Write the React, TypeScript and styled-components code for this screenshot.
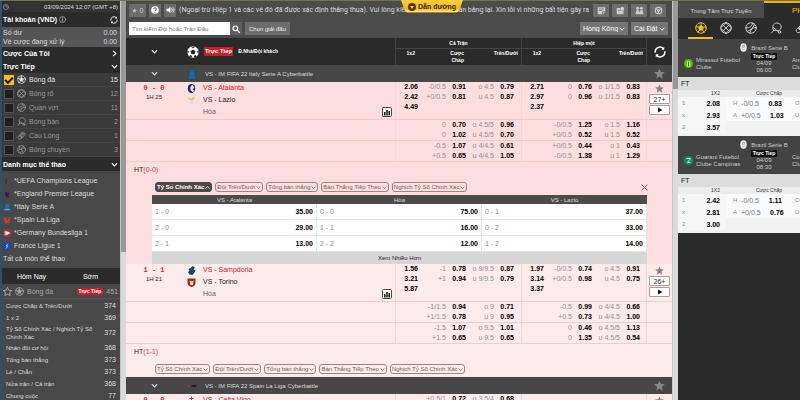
import React from "react";
import styled, { createGlobalStyle } from "styled-components";

const GlobalStyle = createGlobalStyle`
  * { box-sizing: border-box; }
  body { margin: 0; background: #2a2a2a; font-family: "Liberation Sans", Arial, sans-serif; font-size: 7px; color: #ddd; }
  button, input, select { font: inherit; color: inherit; margin: 0; padding: 0; border: 0; border-radius: 0; background: none; }
  button { cursor: pointer; }
  ul { list-style: none; margin: 0; padding: 0; }
  h2, p { margin: 0; font-size: inherit; font-weight: inherit; }
  a { color: inherit; text-decoration: none; }
  svg { display: block; flex: none; }
  table { border-spacing: 0; width: 100%; table-layout: fixed; }
  th, td { padding: 0; }
`;

/* ---------- icons ---------- */

type IconProps = { size?: number; color?: string };

const Svg = ({ size = 9, color = "currentColor", children }: IconProps & { children: React.ReactNode }) => (
  <svg width={size} height={size} viewBox="0 0 24 24" fill="none" stroke={color} strokeWidth="2" strokeLinejoin="round" strokeLinecap="round" aria-hidden="true">
    {children}
  </svg>
);

const Soccer = (p: IconProps) => (
  <Svg {...p}>
    <circle cx="12" cy="12" r="10.5" />
    <path d="M12 7.2l4.7 3.4-1.8 5.5H9.1l-1.8-5.5z" fill={p.color ?? "currentColor"} />
    <path d="M12 7V2M16.8 10.6l5-1.6M15 16.200l3.200 4.400M9 16.200l-3.200 4.400M7.200 10.600l-5-1.600" />
  </Svg>
);
const SolidSoccer = ({ size = 12 }: IconProps) => (
  <svg width={size} height={size} viewBox="0 0 24 24" aria-hidden="true">
    <circle cx="12" cy="12" r="11.500" fill="#fff" />
    <path d="M12 7l5 3.600-1.900 5.900H8.900L7 10.600zM8 1.500h8l-4 2.800zM22.800 8.500l.2 7-3.300-3.900zM1.200 8.500l-.2 7 3.300-3.900zM17.500 18.200l1.700 3-5.200 2 .3-3.600zM6.500 18.200l-1.700 3 5.200 2-.3-3.600z" fill="#222" />
  </svg>
);
const Basketball = (p: IconProps) => (
  <Svg {...p}>
    <circle cx="12" cy="12" r="10.5" />
    <path d="M4.600 4.600l14.800 14.800M19.400 4.600L4.600 19.400M12 1.500c-4 5-8 8-10.500 8.500M12 1.500c4 5 8 8 10.500 8.500M12 22.500c-4-5-8-8-10.500-8.500M12 22.500c4-5 8-8 10.500-8.500" />
  </Svg>
);
const Tennis = (p: IconProps) => (
  <Svg {...p}>
    <circle cx="12" cy="12" r="10.5" />
    <path d="M15 2c0 6-5 10-13 10M22 11c-7 0-12 5-12 11.500M19 4C17 11 12 16 4.500 19" />
  </Svg>
);
const Paddle = (p: IconProps) => (
  <Svg {...p}>
    <path d="M7.500 16.500C3 11 6 2 14 2c6 0 9.500 5 8 10-1 3.500-4 5-7 5-2.500 0-4.500 0-7.500-.5zM7.500 16.500L3 22M7 11l9 8" />
    <circle cx="19" cy="20" r="2.500" />
  </Svg>
);
const Shuttle = (p: IconProps) => (
  <Svg {...p}>
    <path d="M7 12L14 2l3 3 4 1 1 4-9 8zM9 10l5 6M12 9l5-4M14 11l6-4" />
    <path d="M7 12c-4 1-5 4-4 7s5 3 7 1l3-2z" />
  </Svg>
);
const Volley = (p: IconProps) => (
  <Svg {...p}>
    <circle cx="12" cy="12" r="10.5" />
    <path d="M12 12c-4-2-8-1-10 3M12 12c0-5 2-8 6-9.500M12 12c4 2 5 6 3 10M7 3c-1 3 0 6 1 8M21 9c-3-1-6-1-9 0M8 21c2-1 5-3 6-6" />
  </Svg>
);
const Chevron = ({ size = 7, dir = 0, color = "currentColor" }: IconProps & { dir?: number }) => (
  <svg width={size} height={size} viewBox="0 0 12 12" fill="none" stroke={color} strokeWidth="1.800" aria-hidden="true">
    <path d="M1.500 3.500L6 8.500l4.500-5" transform={`rotate(${dir} 6 6)`} />
  </svg>
);
const Star = ({ size = 10, color = "#888", outline }: IconProps & { outline?: boolean }) => (
  <svg width={size} height={size} viewBox="0 0 24 24" fill={outline ? "none" : color} stroke={outline ? color : "none"} strokeWidth="2" aria-hidden="true">
    <path d="M12 1l3.300 7.600 8.200.800-6.200 5.500 1.800 8.100-7.100-4.200L4.900 23l1.800-8.100L.5 9.400l8.200-.8z" />
  </svg>
);
const Refresh = ({ size = 8 }: IconProps) => (
  <svg width={size} height={size} viewBox="0 0 24 24" fill="none" stroke="#fff" strokeWidth="2.800" aria-hidden="true">
    <path d="M2.500 13.500A9.500 9.500 0 0 1 19 5.500M21.500 10.500A9.500 9.500 0 0 1 5 18.500" />
    <path d="M20.500 1.500v6h-6zM3.500 22.500v-6h6z" fill="#fff" stroke="none" />
  </svg>
);
const Clock = () => <Svg size={6} color="#bbb"><circle cx="12" cy="12" r="10" /><path d="M12 6v6h5" /></Svg>;
const Info = () => <Svg size={7} color="#ccc"><circle cx="12" cy="12" r="10.5" /><path d="M12 10.500v7M12 6v1" strokeWidth="2.500" /></Svg>;
const Search = () => <Svg size={8} color="#fff"><circle cx="10" cy="10" r="7" strokeWidth="3.500" /><path d="M16 16l6 6" strokeWidth="4" /></Svg>;
const Help = () => (
  <svg width="8" height="8" viewBox="0 0 24 24" aria-hidden="true">
    <circle cx="12" cy="12" r="11.500" fill="#fff" />
    <path d="M8 9c0-5 8-5 8 0 0 3-4 3-4 6M12 17.500v2.500" fill="none" stroke="#555" strokeWidth="2.800" />
  </svg>
);
const Speaker = () => (
  <svg width="9" height="8" viewBox="0 0 26 24" fill="none" stroke="#fff" strokeWidth="2.600" aria-hidden="true">
    <path d="M1 8h5l7-6v20l-7-6H1z" fill="#fff" stroke="none" />
    <path d="M16 7c3 3 3 7 0 10M20 4c5 5 5 11 0 16" />
  </svg>
);
const Note = () => <svg width="9" height="9" viewBox="0 0 24 24" aria-hidden="true"><path d="M2 3h20v12l-6 7H2z" fill="#ccc" /><path d="M5 8h13M5 12h9M15 21v-6h6" stroke="#666" strokeWidth="2" fill="none" /></svg>;
const Ticket = () => <svg width="9" height="9" viewBox="0 0 24 24" aria-hidden="true"><path d="M2 5h12v3h6v14H2z" fill="#ccc" /><circle cx="17" cy="7" r="5" fill="#ddd" stroke="#666" /><path d="M6 12h6" stroke="#666" strokeWidth="2" /></svg>;
const People = () => <svg width="9" height="9" viewBox="0 0 24 24" fill="#ccc" aria-hidden="true"><circle cx="7" cy="6" r="4" /><circle cx="17" cy="6" r="4" /><path d="M1 22l3-11h6l2 6 2-6h6l3 11z" /></svg>;
const Gear = () => <svg width="9" height="9" viewBox="0 0 24 24" fill="none" stroke="#ccc" strokeWidth="3" aria-hidden="true"><circle cx="12" cy="12" r="8.500" /><circle cx="12" cy="12" r="2.500" /><path d="M5 7l4 3M19 7l-4 3M12 15v5" /></svg>;
const Bars = () => (
  <svg width="10" height="10" viewBox="0 0 20 20" aria-hidden="true">
    <rect x="1" y="1" width="18" height="18" rx="2" fill="#fff" stroke="#444" strokeWidth="2" />
    <path d="M4 17V10h3v7zM8.500 17V6h3v11zM13 17V8h3v9z" fill="#111" />
  </svg>
);
const Play = () => <svg width="6" height="6" viewBox="0 0 12 12" aria-hidden="true"><path d="M2 1l9 5-9 5z" fill="#111" /></svg>;
const Close = () => <svg width="7" height="7" viewBox="0 0 12 12" stroke="#555" strokeWidth="1.500" aria-hidden="true"><path d="M1 1l10 10M11 1L1 11" /></svg>;
const Cup = () => <svg width="7" height="9" viewBox="0 0 14 18" aria-hidden="true"><ellipse cx="7" cy="9" rx="6.500" ry="8.500" fill="#eee" /><path d="M5 4h4v5H5zM4 13h6" stroke="#999" fill="#ccc" /></svg>;

const crests: Record<string, React.ReactNode> = {
  uefa: <path d="M6 4h2v12H6z" fill="#333" />,
  premier: <path d="M5 3l5 3 4 0-2 5 1 5-5 1-3-6z" fill="#3a1646" />,
  italy: <><path d="M9 1l5 4v5l3 7H2l3-7V5z" fill="#1673b8" /><path d="M3 15h13" stroke="#59b6df" strokeWidth="2" /></>,
  spain: <path d="M2 3l4 12M7 3v12l9-12M11 16l5-8" stroke="#d43a3a" strokeWidth="3" fill="none" />,
  germany: <><rect x="1" y="1" width="16" height="16" rx="2" fill="#d22028" /><path d="M5 4v10M8 6l7 3-7 4z" stroke="#fff" strokeWidth="2" fill="#fff" /></>,
  france: <><rect x="2" y="1" width="14" height="17" fill="#1747c8" /><path d="M11 4L7 9h4l-4 6" stroke="#9fd5ff" strokeWidth="2" fill="none" /></>,
  cyber: <path d="M9 0l5 5v5l3 8H1l3-8V5zM5 13h8M7 5h4" fill="#1d6ba5" stroke="#134c79" />,
  atalanta: <><ellipse cx="9" cy="9" rx="7.500" ry="9" fill="#1c2c55" /><path d="M11 2C5 3 5 14 12 16l3-3-4-2 4-4z" fill="#e8edf5" /></>,
  lazio: <><path d="M1 2l7 3 8-4-3 7-4 2-5-3z" fill="#d9c67c" /><path d="M6 9h6v6l-3 3-3-3z" fill="#cfe2ec" /></>,
  sampdoria: <path d="M11 0l-4 4-4 2 2 3-3 4 3 4 6 1 4-5 2-5-4-1 3-4z" fill="#0f4874" />,
  torino: <><path d="M1 1h16v9c0 5-5 7-8 8-3-1-8-3-8-8z" fill="#8f2f20" /><path d="M5 5l4 2 4-2-1 9H7z" fill="#f1d9a8" /></>,
  laliga: <><circle cx="3" cy="9" r="2" fill="#a3452c" /><path d="M8 9h9" stroke="#181818" strokeWidth="3" /></>,
  celta: <path d="M9 1v16M5 5h8M4 10h10" stroke="#b5336b" strokeWidth="2" fill="none" />,
  villarreal: <circle cx="9" cy="9" r="7" fill="#e4c53a" />,
  mirassol: <><circle cx="9" cy="9" r="9" fill="#49c010" /><path d="M6 4h6l1 11H5z" fill="#dff04f" /><path d="M9 5v9" stroke="#1c7808" strokeWidth="2" /></>,
  guarani: <><circle cx="9" cy="9" r="9" fill="#0f8f63" /><path d="M5 5h8l-6 8h6" stroke="#fff" strokeWidth="1.500" fill="none" /></>,
};
const Crest = ({ name, size = 9 }: { name: string; size?: number }) => (
  <svg width={size} height={size} viewBox="0 0 18 18" aria-hidden="true">{crests[name]}</svg>
);

/* ---------- shell ---------- */

const Shell = styled.div`
  display: grid;
  grid-template-columns: 120px 6px minmax(0, 1fr) 6px 122px;
  height: 100vh;
  overflow: hidden;
  border-top: 1px solid #77704f;
`;
const Track = styled.div`
  background: #dadada;
  border-left: 1px solid #c4c4c4;
`;
const Thumb = styled.div<{ $h: number }>`
  height: ${(p) => p.$h}%;
  background: #999;
`;
const Grow = styled.span`
  flex: 1;
  min-width: 0;
`;

/* ---------- sidebar ---------- */

const Sidebar = styled.nav`
  overflow: hidden;
  background: #484848;
  border-left: 2px solid #2d5168;
`;
const DateBar = styled.div`
  display: flex;
  align-items: center;
  justify-content: space-between;
  height: 11px;
  padding: 0 2px 0 1px;
  background: #333;
  font-size: 6px;
`;
const SideHead = styled.button<{ $h?: number }>`
  display: flex;
  align-items: center;
  gap: 2px;
  width: 100%;
  height: ${(p) => p.$h ?? 13}px;
  padding: 0 2px 0 1px;
  background: #2b2b2b;
  color: #fff;
  font-weight: 700;
  text-align: left;
`;
const Balance = styled.dl`
  margin: 0;
  padding: 1px 3px 1px 1px;
  background: #555;
  line-height: 9px;
  div { display: flex; justify-content: space-between; }
  dd { margin: 0; }
`;
const SportRow = styled.label<{ $on?: boolean }>`
  display: flex;
  align-items: center;
  gap: 3px;
  height: 14px;
  padding: 0 2px;
  background: #3a3a3a;
  border-bottom: 1px solid #444;
  color: ${(p) => (p.$on ? "#e4e4e4" : "#999")};
`;
const Tick = styled.input`
  appearance: none;
  display: grid;
  place-items: center;
  width: 10px;
  height: 10px;
  background: #1f1f1f;
  border: 1px solid #555;
  &:checked { background: #f6c012; border-color: #f6c012; }
  &:checked::after {
    content: "";
    width: 6px;
    height: 3px;
    border: solid #111;
    border-width: 0 0 2px 2px;
    transform: rotate(-45deg);
  }
`;
const LeagueList = styled.ul`
  padding: 3px 0 0 1px;
  a { display: flex; align-items: center; gap: 3px; height: 13px; }
`;
const DayTabs = styled.div`
  display: grid;
  grid-template-columns: 1fr 1fr;
  height: 16px;
  margin-top: 3px;
  background: #2b2b2b;
  color: #fff;
`;
const SportHead = styled.div`
  display: flex;
  align-items: center;
  gap: 3px;
  height: 15px;
  padding: 0 2px 0 1px;
  border-bottom: 1px solid #555;
  color: #aaa;
`;
const Live = styled.span<{ $dark?: boolean }>`
  padding: 0 2px;
  border-radius: 1px;
  background: ${(p) => (p.$dark ? "#111" : "#c81f28")};
  color: #fff;
  font-size: 5px;
  font-weight: 700;
  line-height: 7px;
`;
const BetTypes = styled.ul`
  padding-top: 1px;
  font-size: 6px;
  a {
    display: flex;
    align-items: center;
    justify-content: space-between;
    gap: 6px;
    min-height: 12px;
    padding: 1px 4px;
    line-height: 8px;
  }
  span + span { font-size: 7px; }
`;

const sports = [
  { name: "Bóng đá", count: 15, Icon: Soccer },
  { name: "Bóng rổ", count: 12, Icon: Basketball },
  { name: "Quần vợt", count: 11, Icon: Tennis },
  { name: "Bóng bàn", count: 2, Icon: Paddle },
  { name: "Cầu Lông", count: 1, Icon: Shuttle },
  { name: "Bóng chuyền", count: 3, Icon: Volley },
];
const leagues = [
  ["uefa", "*UEFA Champions League"],
  ["premier", "*England Premier League"],
  ["italy", "*Italy Serie A"],
  ["spain", "*Spain La Liga"],
  ["germany", "*Germany Bundesliga 1"],
  ["france", "France Ligue 1"],
];
const betTypes: [string, number][] = [
  ["Cược Chấp & Trên/Dưới", 374],
  ["1 x 2", 369],
  ["Tỷ Số Chính Xác / Nghịch Tỷ Số Chính Xác", 372],
  ["Nhân đôi cơ hội", 368],
  ["Tổng bàn thắng", 373],
  ["Lẻ / Chẵn", 373],
  ["Nửa trận / Cả trận", 368],
  ["Chung cuộc", 77],
];

const SidebarPanel = () => (
  <Sidebar>
    <DateBar><Clock /><span>03/09/2024 12:07 (GMT +8)</span></DateBar>
    <SideHead $h={15}>Tài khoản (VND) <Info /><Grow /><Refresh size={8} /></SideHead>
    <Balance>
      <div><dt>Số dư</dt><dd>0.00</dd></div>
      <div><dt>Vé cược đang xử lý</dt><dd>0.00</dd></div>
    </Balance>
    <SideHead><Grow>Cược Của Tôi</Grow><Chevron dir={-90} /></SideHead>
    <SideHead><Grow>Trực Tiếp</Grow><Chevron /></SideHead>
    {sports.map(({ name, count, Icon }, i) => (
      <SportRow key={name} $on={i === 0}>
        <Tick type="checkbox" defaultChecked={i === 0} /><Icon size={9} /><Grow>{name}</Grow>{count}
      </SportRow>
    ))}
    <SideHead $h={14}><Grow>Danh mục thể thao</Grow><Chevron /></SideHead>
    <LeagueList>
      {leagues.map(([icon, name]) => <li key={name}><a href="#league"><Crest name={icon} size={8} />{name}</a></li>)}
      <li><a href="#all">Tất cả môn thể thao</a></li>
    </LeagueList>
    <DayTabs><button>Hôm Nay</button><button>Sớm</button></DayTabs>
    <SportHead><Star size={9} color="#bbb" outline /><Soccer size={9} /><Grow>Bóng đá</Grow><Live>Trực Tiếp</Live>451</SportHead>
    <BetTypes>
      {betTypes.map(([name, n]) => <li key={name}><a href="#type"><span>{name}</span><span>{n}</span></a></li>)}
    </BetTypes>
  </Sidebar>
);

/* ---------- odds area ---------- */

const Main = styled.main`
  overflow: hidden;
  background: #fce8e8;
`;
const Notice = styled.div`
  display: flex;
  align-items: center;
  gap: 3px;
  height: 18px;
  padding: 0 6px 0 3px;
  background: #4b4b4b;
`;
const Ticker = styled.p`
  flex: 1;
  display: flex;
  justify-content: space-between;
  overflow: hidden;
  white-space: nowrap;
  margin-right: 1px;
  font-family: Roboto, "Liberation Sans", sans-serif;
  font-size: 7px;
`;
const ToolButton = styled.button<{ $w?: number }>`
  display: flex;
  align-items: center;
  justify-content: center;
  gap: 3px;
  width: ${(p) => p.$w ?? 12}px;
  height: 13px;
  background: #6c6c6c;
  color: #ccc;
`;
const Filters = styled.div`
  display: flex;
  align-items: center;
  gap: 3px;
  height: 19px;
  padding: 0 4px 0 3px;
  background: #4b4b4b;
`;
const SearchBox = styled.form`
  display: flex;
  height: 13px;
  input { width: 101px; padding: 0 3px; background: #fff; color: #333; font-size: 6px; }
  input::placeholder { color: #777; }
  button { display: grid; place-items: center; width: 12px; background: #5f5f5f; }
`;
const GreyButton = styled.button`
  height: 13px;
  padding: 0 4px;
  background: #6c6c6c;
  color: #eee;
  font-size: 6px;
`;
const Picker = styled.label<{ $w: number }>`
  display: flex;
  align-items: center;
  width: ${(p) => p.$w}px;
  height: 13px;
  padding: 0 3px;
  background: #757575;
  color: #fff;
  select { appearance: none; flex: 1; min-width: 0; font-size: 7px; }
`;
const Head = styled.thead`
  background: #2a2a2a;
  color: #fff;
  font-size: 5px;
  line-height: 7px;
  th { vertical-align: middle; }
`;
const HeadTop = styled.tr`
  height: 10px;
`;
const HeadSub = styled.tr`
  height: 17px;
  th { vertical-align: top; padding-top: 1px; text-align: right; border-top: 1px solid #454545; }
`;
const GroupTh = styled.th`
  border-left: 1px solid #454545;
`;
const SubTh = styled.th<{ $pr: number; $edge?: boolean }>`
  padding-right: ${(p) => p.$pr}px;
  border-left: ${(p) => (p.$edge ? "1px solid #454545" : "0")};
`;
const Centered = styled.div`
  display: grid;
  place-items: center;
`;
const Titled = styled.div<{ $gap?: number }>`
  display: flex;
  align-items: center;
  gap: ${(p) => p.$gap ?? 8}px;
  padding-left: 5px;
`;
const HeadLive = styled.span`
  padding: 0 1px;
  border-radius: 1px;
  background: #c81f28;
  font-size: 6px;
  line-height: 9px;
`;
const LeagueRow = styled.tr`
  height: 17px;
  background: #474747;
  color: #ddd;
  font-size: 6px;
`;
const Body = styled.tbody<{ $tone: "hot" | "soft" }>`
  background: ${(p) => (p.$tone === "hot" ? "#fcdede" : "#fdeaea")};
  color: #222;
`;
const OddsRow = styled.tr<{ $h: number }>`
  height: ${(p) => p.$h}px;
  td { vertical-align: top; border-bottom: 1px solid #efcdcd; }
`;
const OddsTd = styled.td<{ $pr: number; $edge?: boolean }>`
  padding-right: ${(p) => p.$pr}px;
  border-left: ${(p) => (p.$edge ? "1px solid #f3d6d6" : "0")};
  text-align: right;
  font-weight: 700;
  line-height: 10px;
  color: #000;
`;
const Line = styled.div`
  display: grid;
  grid-template-columns: 1fr 20px;
  white-space: nowrap;
  span { color: #8a939b; font-weight: 400; }
`;
const Edge = styled.td`
  border-left: 1px solid #f3d6d6;
`;
const Score = styled.div`
  padding-top: 2px;
  text-align: center;
  line-height: 8px;
  font-size: 6px;
  strong { display: block; font: 700 7px/9px "Liberation Mono", monospace; color: #d8242f; }
`;
const Teams = styled.div`
  display: grid;
  padding-left: 5px;
  line-height: 12px;
  div { display: flex; align-items: center; gap: 7px; height: 12px; }
  div:first-child { color: #c9202b; }
  div:last-of-type { padding: 0 3px 0 16px; color: #666; }
`;
const Actions = styled.div`
  display: grid;
  justify-items: center;
  gap: 1px;
  padding: 2px 2px 0;
  button {
    display: grid;
    place-items: center;
    width: 100%;
    height: 10px;
    background: #fff;
    border: 1px solid #a9a0a0;
    border-radius: 1px;
  }
`;
const HalfTime = styled.div`
  padding: 2px 0 0 8px;
  line-height: 12px;
  span { color: #d8343f; }
`;
const Pills = styled.div`
  display: flex;
  align-items: center;
  gap: 3px;
  padding: 6px 24px 3px 29px;
`;
const Pill = styled.button<{ $on?: boolean }>`
  display: flex;
  align-items: center;
  gap: 1px;
  height: 10px;
  padding: 0 1px;
  border: 1px solid ${(p) => (p.$on ? "#4b4b4b" : "#9b8585")};
  border-radius: 3px;
  background: ${(p) => (p.$on ? "#4b4b4b" : "transparent")};
  color: ${(p) => (p.$on ? "#fff" : "#6e5f5f")};
  font-size: 6px;
  font-weight: ${(p) => (p.$on ? 700 : 400)};
  white-space: nowrap;
`;
const ScoreBox = styled.div`
  margin: 0 25px 0 26px;
  background: #fff;
`;
const ScoreTable = styled.table`
  th { height: 9px; background: #4b4b4b; color: #ddd; font-size: 6px; font-weight: 400; line-height: 8px; }
  td { height: 16px; border-bottom: 1px solid #e4e4e4; border-right: 1px solid #e4e4e4; }
`;
const Pair = styled.div`
  display: flex;
  justify-content: space-between;
  padding: 0 3px;
  color: #75899a;
  strong { color: #000; }
`;
const More = styled.button`
  display: block;
  width: 100%;
  height: 12px;
  background: #d6d6d6;
  color: #222;
  font-size: 6px;
`;

type P = [string, string];
type Row = { ft: string[]; h: P[]; o: P[]; ht: string[]; hh: P[]; ho: P[] };
type Match = {
  tone: "hot" | "soft"; score: string; time: string; home: string; away: string;
  crests: [string, string]; extra: string; half: string; open?: boolean; rows: Row[];
};

const matches: Match[] = [
  {
    tone: "hot", score: "0 - 0", time: "1H 25", home: "VS - Atalanta", away: "VS - Lazio",
    crests: ["atalanta", "lazio"], extra: "27+", half: "(0-0)", open: true,
    rows: [
      { ft: ["2.06", "2.42", "4.49"], h: [["-0/0.5", "0.91"], ["+0/0.5", "0.81"]], o: [["o 4.5", "0.79"], ["u 4.5", "0.87"]], ht: ["2.71", "2.97", "2.37"], hh: [["0", "0.76"], ["0", "0.96"]], ho: [["o 1/1.5", "0.83"], ["u 1/1.5", "0.83"]] },
      { ft: [], h: [["0", "0.70"], ["0", "1.02"]], o: [["o 4.5/5", "0.96"], ["u 4.5/5", "0.70"]], ht: [], hh: [["-0/0.5", "1.25"], ["+0/0.5", "0.52"]], ho: [["o 1.5", "1.16"], ["u 1.5", "0.52"]] },
      { ft: [], h: [["-0.5", "1.07"], ["+0.5", "0.65"]], o: [["o 4/4.5", "0.61"], ["u 4/4.5", "1.05"]], ht: [], hh: [["+0/0.5", "0.44"], ["-0/0.5", "1.38"]], ho: [["o 1", "0.43"], ["u 1", "1.29"]] },
    ],
  },
  {
    tone: "soft", score: "1 - 1", time: "1H 21", home: "VS - Sampdoria", away: "VS - Torino",
    crests: ["sampdoria", "torino"], extra: "26+", half: "(1-1)",
    rows: [
      { ft: ["1.56", "3.21", "5.87"], h: [["-1", "0.78"], ["+1", "0.94"]], o: [["o 9/9.5", "0.87"], ["u 9/9.5", "0.79"]], ht: ["1.97", "3.14", "3.37"], hh: [["-0/0.5", "0.74"], ["+0/0.5", "0.98"]], ho: [["o 4.5", "0.91"], ["u 4.5", "0.75"]] },
      { ft: [], h: [["-1/1.5", "0.94"], ["+1/1.5", "0.78"]], o: [["o 9", "0.71"], ["u 9", "0.95"]], ht: [], hh: [["-0.5", "0.99"], ["+0.5", "0.73"]], ho: [["o 4/4.5", "0.66"], ["u 4/4.5", "1.00"]] },
      { ft: [], h: [["-1.5", "1.07"], ["+1.5", "0.65"]], o: [["o 9.5", "1.01"], ["u 9.5", "0.65"]], ht: [], hh: [["0", "0.46"], ["0", "1.35"]], ho: [["o 4.5/5", "1.13"], ["u 4.5/5", "0.54"]] },
    ],
  },
];
const nextMatch: Match = {
  tone: "soft", score: "0 - 0", time: "1H 20", home: "VS - Celta Vigo", away: "VS - Villarreal",
  crests: ["celta", "villarreal"], extra: "24+", half: "(0-0)",
  rows: [{ ft: [], h: [["+0.5/1", "0.72"], ["-0.5/1", "1.00"]], o: [["o 3.5/4", "0.68"], ["u 3.5/4", "0.98"]], ht: [], hh: [], ho: [] }],
};

const Lines = ({ items }: { items: P[] }) => (
  <>{items.map(([l, v], i) => <Line key={i}><span>{l}</span>{v}</Line>)}</>
);
const Singles = ({ items }: { items: string[] }) => <>{items.map((v) => <div key={v}>{v}</div>)}</>;

const pillNames = ["Tỷ Số Chính Xác", "Đội Trên/Dưới", "Tổng bàn thắng", "Bàn Thắng Tiếp Theo", "Nghịch Tỷ Số Chính Xác"];
const scoreRows = [
  [["1 - 0", "35.00"], ["0 - 0", "75.00"], ["0 - 1", "37.00"]],
  [["2 - 0", "29.00"], ["1 - 1", "16.00"], ["0 - 2", "33.00"]],
  [["2 - 1", "13.00"], ["2 - 2", "12.00"], ["1 - 2", "14.00"]],
];

const MatchBody = ({ m }: { m: Match }) => (
  <Body $tone={m.tone}>
    {m.rows.map((r, i) => (
      <OddsRow key={i} $h={i === 0 ? 38 : 21}>
        <td>{i === 0 && <Score><strong>{m.score}</strong>{m.time}</Score>}</td>
        <td>
          {i === 0 && (
            <Teams>
              <div><Crest name={m.crests[0]} />{m.home}</div>
              <div><Crest name={m.crests[1]} />{m.away}</div>
              <div><Grow>Hòa</Grow><Bars /></div>
            </Teams>
          )}
        </td>
        <OddsTd $pr={4} $edge><Singles items={r.ft} /></OddsTd>
        <OddsTd $pr={4}><Lines items={r.h} /></OddsTd>
        <OddsTd $pr={7}><Lines items={r.o} /></OddsTd>
        <OddsTd $pr={4} $edge><Singles items={r.ht} /></OddsTd>
        <OddsTd $pr={4}><Lines items={r.hh} /></OddsTd>
        <OddsTd $pr={6}><Lines items={r.ho} /></OddsTd>
        <Edge>
          {i === 0 && <Actions><Star size={9} color="#8a8080" /><button>{m.extra}</button><button aria-label="Xem trực tiếp"><Play /></button></Actions>}
        </Edge>
      </OddsRow>
    ))}
    <tr>
      <td colSpan={9}>
        <HalfTime>HT<span>{m.half}</span></HalfTime>
        <Pills>
          {pillNames.map((n, i) => {
            const on = m.open && i === 0;
            return <Pill key={n} $on={on}>{n}<Chevron size={5} dir={on ? 180 : 0} /></Pill>;
          })}
          <Grow />
          {m.open && <button aria-label="Đóng"><Close /></button>}
        </Pills>
        {m.open && (
          <ScoreBox>
            <ScoreTable>
              <thead><tr><th>{m.home}</th><th>Hòa</th><th>{m.away}</th></tr></thead>
              <tbody>
                {scoreRows.map((r, i) => (
                  <tr key={i}>{r.map(([s, v]) => <td key={s}><Pair>{s}<strong>{v}</strong></Pair></td>)}</tr>
                ))}
              </tbody>
            </ScoreTable>
            <More>Xem Nhiều Hơn</More>
          </ScoreBox>
        )}
      </td>
    </tr>
  </Body>
);

const LeagueHead = ({ icon, name }: { icon: string; name: string }) => (
  <tbody>
    <LeagueRow>
      <td><Centered><Chevron size={7} /></Centered></td>
      <td colSpan={7}><Titled><Crest name={icon} size={10} />{name}</Titled></td>
      <td><Centered><Star size={11} /></Centered></td>
    </LeagueRow>
  </tbody>
);

const MainPanel = () => (
  <Main>
    <Notice>
      <ToolButton $w={17}><Star size={5} color="#bbb" />0</ToolButton>
      <ToolButton aria-label="Trợ giúp"><Help /></ToolButton>
      <ToolButton aria-label="Âm thanh"><Speaker /></ToolButton>
      <Ticker>
        <span>(Ngoại trừ Hiệp 1 và các vé đó đã được xác định thắng thua). Vui lòng kiểm tr</span>
        <span>cân bằng lại. Xin lỗi vì những bất tiện gây ra</span>
      </Ticker>
      <ToolButton $w={16} aria-label="Ghi chú"><Note /></ToolButton>
      <ToolButton $w={16} aria-label="Vé cược"><Ticket /></ToolButton>
      <ToolButton $w={16} aria-label="Thành viên"><People /></ToolButton>
      <ToolButton $w={16} aria-label="Tùy chọn"><Gear /></ToolButton>
    </Notice>
    <Filters>
      <SearchBox>
        <input type="text" aria-label="Tìm kiếm" placeholder="Tìm kiếm Đội hoặc Trận Đấu" />
        <button type="button" aria-label="Tìm"><Search /></button>
      </SearchBox>
      <GreyButton>Chọn giải đấu</GreyButton>
      <Grow />
      <Picker $w={48}><select aria-label="Loại tỷ lệ"><option>Hồng Kông</option></select><Chevron size={6} /></Picker>
      <Picker $w={37}><select aria-label="Cài đặt"><option>Cài Đặt</option></select><Chevron size={6} /></Picker>
    </Filters>
    <table>
      <colgroup>
        <col style={{ width: 56 }} /><col />
        <col style={{ width: 27 }} /><col style={{ width: 48 }} /><col style={{ width: 51 }} />
        <col style={{ width: 27 }} /><col style={{ width: 48 }} /><col style={{ width: 50 }} />
        <col style={{ width: 26 }} />
      </colgroup>
      <Head>
        <HeadTop>
          <th rowSpan={2}><Centered><Chevron size={7} /></Centered></th>
          <th rowSpan={2}><Titled $gap={5}><SolidSoccer size={12} /><HeadLive>Trực Tiếp</HeadLive>Đ.Nhà/Đội khách</Titled></th>
          <GroupTh colSpan={3}>Cả Trận</GroupTh>
          <GroupTh colSpan={3}>Hiệp một</GroupTh>
          <GroupTh rowSpan={2}><Centered><Refresh size={12} /></Centered></GroupTh>
        </HeadTop>
        <HeadSub>
          <SubTh $pr={7} $edge>1x2</SubTh><SubTh $pr={6}>Cược<br />Chấp</SubTh><SubTh $pr={3}>Trên/Dưới</SubTh>
          <SubTh $pr={7} $edge>1x2</SubTh><SubTh $pr={6}>Cược<br />Chấp</SubTh><SubTh $pr={3}>Trên/Dưới</SubTh>
        </HeadSub>
      </Head>
      <LeagueHead icon="cyber" name="VS - IM FIFA 22 Italy Serie A Cyberbattle" />
      {matches.map((m) => <MatchBody key={m.home} m={m} />)}
      <LeagueHead icon="laliga" name="VS - IM FIFA 22 Spain La Liga Cyberbattle" />
      <MatchBody m={nextMatch} />
    </table>
  </Main>
);

/* ---------- live centre ---------- */

const Aside = styled.aside`
  overflow: hidden;
  background: #2b2b2b;
`;
const Wide = styled.div`
  min-width: 172px;
`;
const CentreTabs = styled.div`
  display: grid;
  grid-template-columns: 1fr 1fr;
  height: 17px;
`;
const CentreTab = styled.button<{ $on?: boolean }>`
  padding-left: ${(p) => (p.$on ? 28 : 0)}px;
  background: ${(p) => (p.$on ? "#2b2b2b" : "#4b4b4b")};
  border-top: 2px solid ${(p) => (p.$on ? "#e8b90c" : "#4b4b4b")};
  color: ${(p) => (p.$on ? "#f6c012" : "#ddd")};
  font-size: ${(p) => (p.$on ? 8 : 6)}px;
  text-align: ${(p) => (p.$on ? "left" : "center")};
  white-space: nowrap;
`;
const SportTabs = styled.div`
  display: flex;
  height: 21px;
  padding: 0 10px;
`;
const SportTab = styled.button<{ $on?: boolean }>`
  display: grid;
  place-items: center;
  flex: none;
  width: 25px;
  border-bottom: 2px solid ${(p) => (p.$on ? "#f6c012" : "transparent")};
  color: ${(p) => (p.$on ? "#f6c012" : "#ccc")};
`;
const EventCard = styled.section`
  padding-bottom: 3px;
  background: #f2f2f2;
`;
const EventHead = styled.header`
  height: 38px;
  padding: 3px 6px 0;
  background: #434343;
  font-size: 6px;
  color: #ccc;
`;
const EventLeague = styled.h2`
  display: flex;
  align-items: center;
  justify-content: center;
  gap: 4px;
  height: 11px;
`;
const EventTeams = styled.div`
  display: grid;
  grid-template-columns: 1fr 40px 1fr;
  line-height: 7px;
  align-items: center;
`;
const Side = styled.div<{ $end?: boolean }>`
  display: flex;
  align-items: center;
  gap: 3px;
  padding-left: ${(p) => (p.$end ? 8 : 0)}px;
`;
const Kickoff = styled.div`
  display: grid;
  justify-items: center;
`;
const FullTime = styled.div`
  height: 13px;
  padding-left: 3px;
  background: #dcdcdc;
  color: #222;
  line-height: 13px;
`;
const CentreOdds = styled.table`
  background: #fafafa;
  color: #888;
  thead { background: #ececec; color: #333; font-size: 5px; line-height: 7px; }
  th { height: 7px; font-weight: 400; text-align: right; padding-right: 6px; }
  td { height: 12px; }
  td:first-child { background: #f6f6f6; }
  tr:last-child td + td { background: #f2f2f2; }
  strong { color: #000; }
`;
const Cell = styled.div<{ $inset?: boolean }>`
  display: grid;
  grid-template-columns: 8px 1fr 23px;
  padding: 0 6px 0 ${(p) => (p.$inset ? 7 : 4)}px;
  text-align: right;
  span:first-child { text-align: left; font-size: 6px; }
  span + span { color: #64808f; }
`;

type EventInfo = { home: string; away: string; crest: string; time: string; x: string[]; h: P[] };
const events: EventInfo[] = [
  { home: "Mirassol Futebol Clube", away: "America Futebol Clube", crest: "mirassol", time: "06:00", x: ["2.08", "2.93", "3.57"], h: [["-0/0.5", "0.83"], ["+0/0.5", "1.03"]] },
  { home: "Guarani Futebol Clube Campinas", away: "Coritiba Football Club", crest: "guarani", time: "08:30", x: ["2.42", "2.81", "3.00"], h: [["-0/0.5", "1.11"], ["+0/0.5", "0.76"]] },
];

const CentrePanel = () => (
  <Aside>
    <Wide>
      <CentreTabs><CentreTab>Trung Tâm Trực Tuyến</CentreTab><CentreTab $on>PHIẾU CƯỢC</CentreTab></CentreTabs>
      <SportTabs>
        {[Soccer, Basketball, Tennis, Paddle, Shuttle, Volley].map((Icon, i) => (
          <SportTab key={i} $on={i === 0} aria-label={sports[i].name}><Icon size={12} /></SportTab>
        ))}
      </SportTabs>
      {events.map((e) => (
        <EventCard key={e.crest}>
          <EventHead>
            <EventLeague><Cup />Brazil Serie B</EventLeague>
            <EventTeams>
              <Side><Crest name={e.crest} />{e.home}</Side>
              <Kickoff><Live $dark>Trực Tiếp</Live><span>04/09</span><span>{e.time}</span></Kickoff>
              <Side $end>{e.away}</Side>
            </EventTeams>
          </EventHead>
          <FullTime>FT</FullTime>
          <CentreOdds>
            <colgroup><col style={{ width: 48 }} /><col style={{ width: 62 }} /><col /></colgroup>
            <thead><tr><th>1X2</th><th>Cược Chấp</th><th>Trên/Dưới</th></tr></thead>
            <tbody>
              {["1", "x", "2"].map((k, i) => (
                <tr key={k}>
                  <td><Cell><span>{k}</span><span /><strong>{e.x[i]}</strong></Cell></td>
                  <td>{e.h[i] && <Cell $inset><span>{i ? "A" : "H"}</span><span>{e.h[i][0]}</span><strong>{e.h[i][1]}</strong></Cell>}</td>
                  <td>{e.h[i] && <Cell $inset><span>{i ? "U" : "O"}</span></Cell>}</td>
                </tr>
              ))}
            </tbody>
          </CentreOdds>
        </EventCard>
      ))}
    </Wide>
  </Aside>
);

/* ---------- guide badge ---------- */

const Guide = styled.button`
  position: absolute;
  top: 0;
  left: 54%;
  display: flex;
  align-items: center;
  justify-content: center;
  gap: 2px;
  width: 62px;
  height: 13px;
  transform: translateX(-50%);
  clip-path: polygon(0 0, 100% 0, 94% 80%, 90% 100%, 10% 100%, 6% 80%);
  background: linear-gradient(#f7cf3c, #f3b91d 70%, #ffe88a 90%, #6b4a08);
  color: #3d2500;
  font-size: 7px;
  font-weight: 700;
`;

export default function App() {
  return (
    <>
      <GlobalStyle />
      <Shell>
        <SidebarPanel />
        <Track><Thumb $h={63} /></Track>
        <MainPanel />
        <Track><Thumb $h={22} /></Track>
        <CentrePanel />
      </Shell>
      <Guide>
        <svg width="8" height="8" viewBox="0 0 16 16" aria-hidden="true"><circle cx="8" cy="8" r="8" fill="#5a3300" /><path d="M4 6h8l-4 6z" fill="#f7cf3c" /></svg>
        Dẫn đường
      </Guide>
    </>
  );
}
